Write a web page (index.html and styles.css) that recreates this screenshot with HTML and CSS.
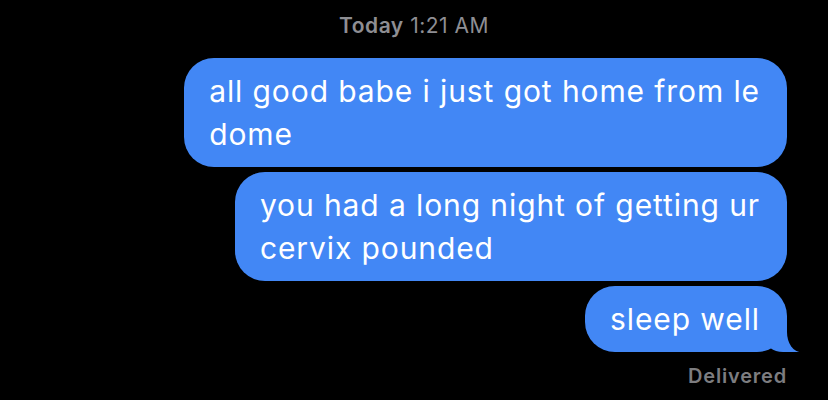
FILE: index.html
```html
<!DOCTYPE html>
<html lang="en">
<head>
    <meta charset="UTF-8">
    <meta name="viewport" content="width=device-width, initial-scale=1.0">
    <title>Messages</title>
    <link rel="stylesheet" href="styles.css">
</head>
<body>
    <div class="thread">
        <div class="stamp"><b>Today</b> 1:21 AM</div>

        <div class="messages">
            <div class="bubble">all good babe i just got home from le<br>dome</div>
            <div class="bubble">you had a long night of getting ur<br>cervix pounded</div>
            <div class="bubble tail">sleep well</div>
        </div>

        <div class="status">Delivered</div>
    </div>
</body>
</html>
```

FILE: styles.css
```css
body {
    margin: 0;
    background: #000;
    font-family: Inter, "Noto Sans", sans-serif;
}
.thread {
    padding: 13px 41px 0 0;
}
.stamp {
    text-align: center;
    color: #8e8e93;
    font-size: 21px;
    line-height: 25px;
    letter-spacing: 0.5px;
    padding-left: 41px;
    margin-bottom: 20px;
}
.stamp b {
    font-weight: 600;
}
.messages {
    display: flex;
    flex-direction: column;
    align-items: flex-end;
    gap: 5px;
}
.bubble {
    position: relative;
    padding: 12px 27px 11px 25px;
    background: #4287f5;
    color: #fff;
    font-size: 30px;
    line-height: 43px;
    letter-spacing: 0.9px;
    white-space: nowrap;
    border-radius: 30px;
}
.tail::before {
    content: "";
    position: absolute;
    right: -12px;
    bottom: 0;
    width: 34px;
    height: 30px;
    background: #4287f5;
    border-bottom-left-radius: 18px 14px;
}
.tail::after {
    content: "";
    position: absolute;
    right: -24px;
    bottom: 0;
    width: 24px;
    height: 30px;
    background: #000;
    border-bottom-left-radius: 14px 20px;
}
.status {
    text-align: right;
    color: #7d7d80;
    font-size: 20px;
    line-height: 24px;
    font-weight: 600;
    letter-spacing: 0.8px;
    margin-top: 12px;
}
```
